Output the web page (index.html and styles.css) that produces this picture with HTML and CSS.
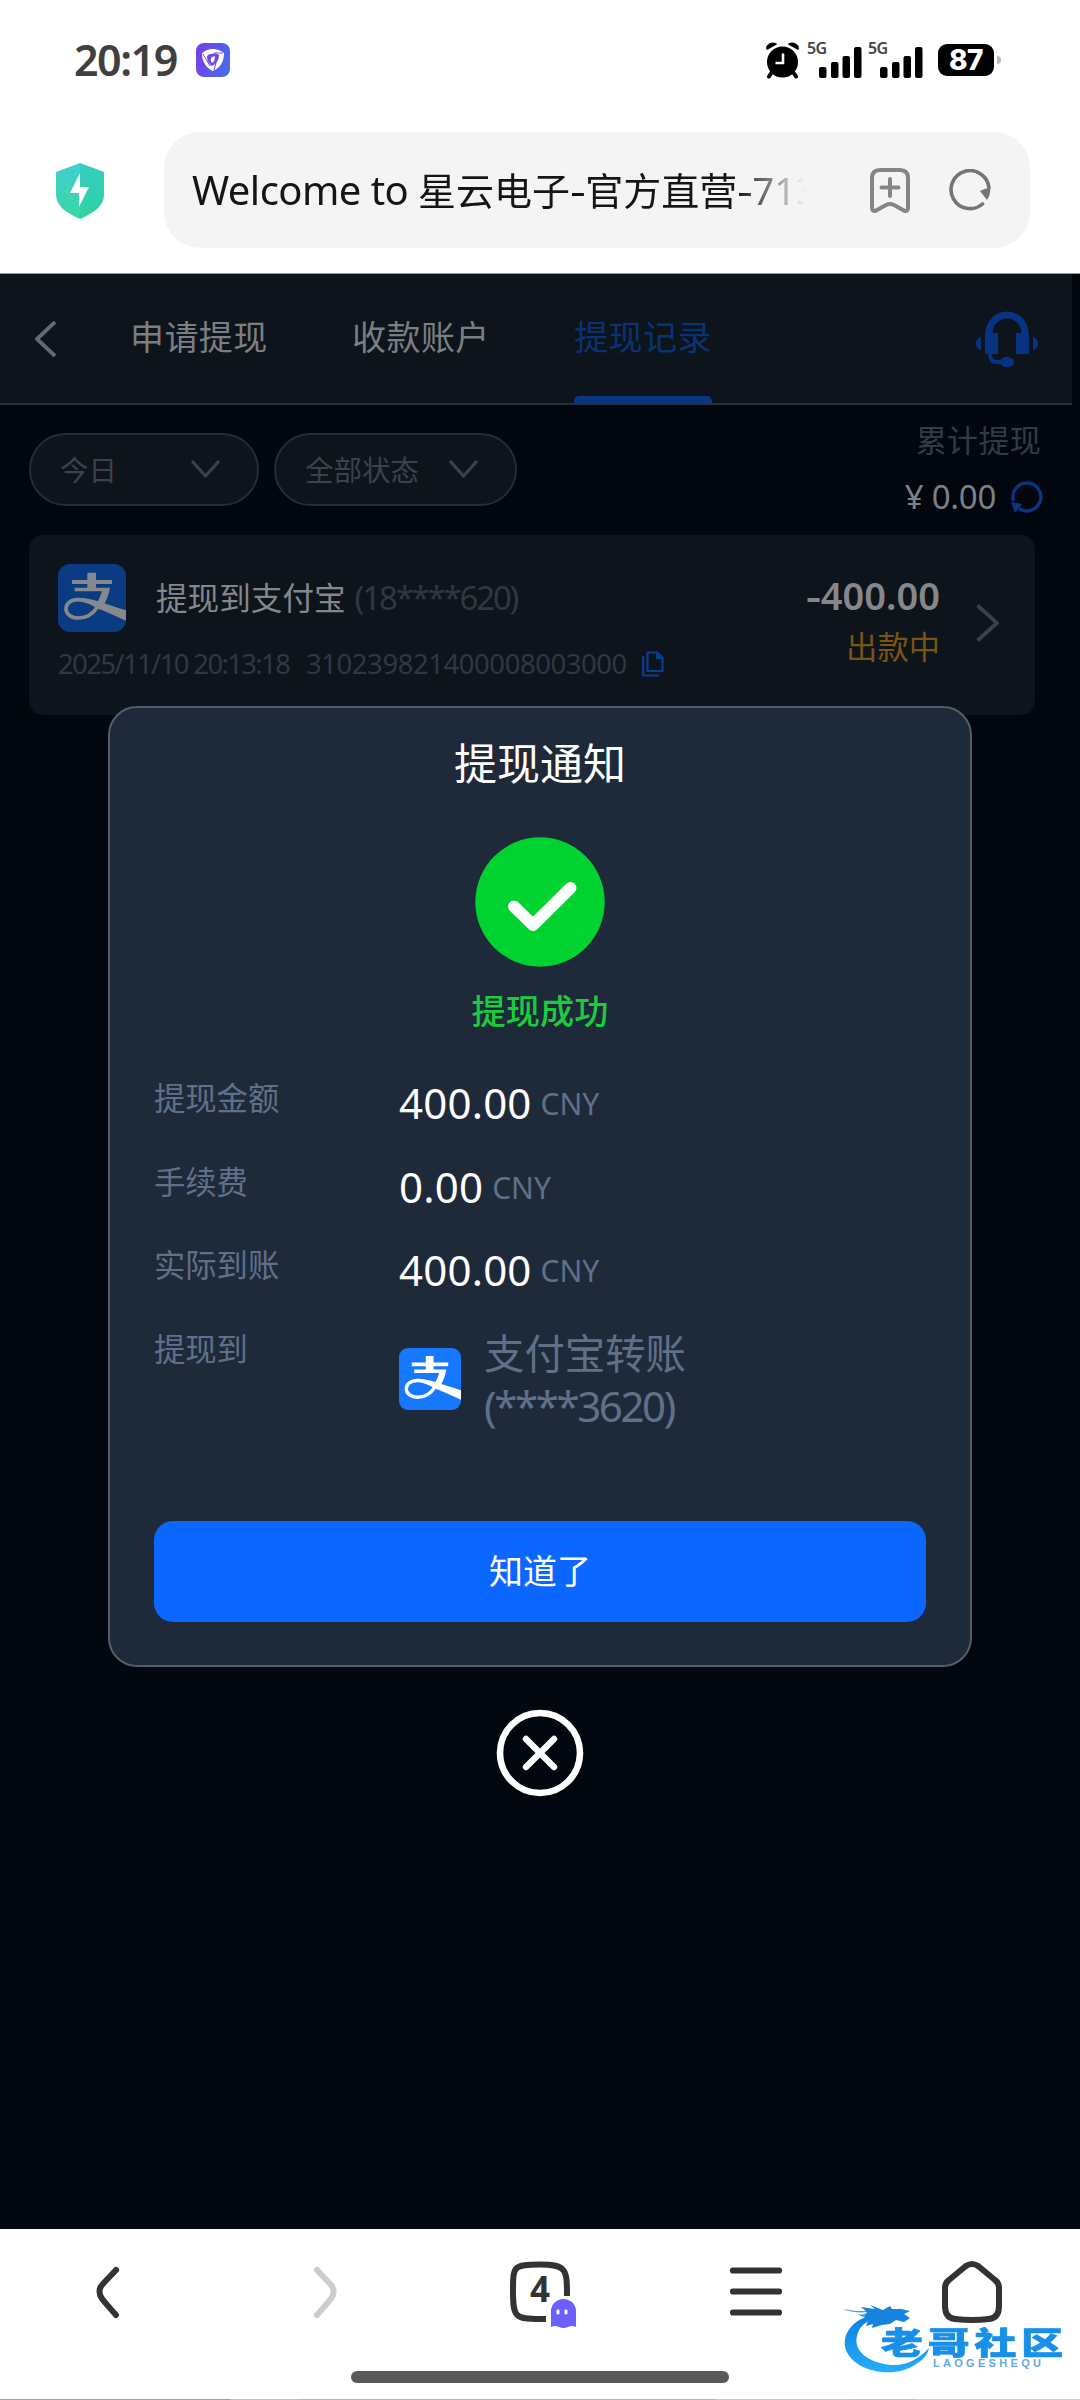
FILE: index.html
```html
<!DOCTYPE html>
<html lang="zh-CN">
<head>
<meta charset="utf-8">
<title>提现记录</title>
<link rel="stylesheet" href="styles.css">
</head>
<body>
<svg class="defs" width="0" height="0">
  <symbol id="alipay" viewBox="0 0 204 204">
    <path d="M88 26h26v22h48v12h-48v11h42c-5 28-16 50-29 66l-19-9c11-13 19-28 24-46H50V71h38V60H42V48h46z" fill="currentColor"/>
    <path d="M119 128C106 148 86 162 62 162c-22 0-38-11-38-28 0-16 15-27 36-27 22 0 42 8 62 19" fill="none" stroke="currentColor" stroke-width="11"/>
    <path d="M64 101c44 2 92 24 140 38v31l-94-42c-16-8-30-14-46-17z" fill="currentColor"/>
  </symbol>
  <symbol id="signal" viewBox="0 0 44 31">
    <rect x="0" y="20" width="7.500" height="11" rx="2"/><rect x="12" y="15" width="7.500" height="16" rx="2"/><rect x="23.500" y="9" width="7.500" height="22" rx="2"/><rect x="35" y="0" width="7.500" height="31" rx="2"/>
  </symbol>
</svg>

<div class="screen">
  <header class="status">
    <span class="clock">20:19</span>
    <svg class="app-badge" viewBox="0 0 34 34">
      <defs><linearGradient id="gp" x1="0" y1="0" x2="1" y2="0.300"><stop offset="0" stop-color="#7c3be8"/><stop offset="1" stop-color="#4a68ea"/></linearGradient></defs>
      <rect width="34" height="34" rx="8" fill="url(#gp)"/>
      <path d="M6 10.500C9 7 14 6 17 6s8 1.500 11 4c0 8-3 14-11 18C9 24 6 18 6 10.500z" fill="#fff"/>
      <path d="M11 13c3-3 9-3 12-1 0 4-2 9-7 11-3-2-5-5-5-10z" fill="#6a4ce8"/>
      <path d="M15 15c2-2 4-2 4-1 0 2-1 5-3 6-1-1-1.500-3-1-5z" fill="#fff"/>
      <path d="M7 11l7 12M18 27l2-7M27 10l-9 0" stroke="#6a4ce8" stroke-width="1"/>
    </svg>
    <div class="status-right">
      <svg class="alarm" viewBox="0 0 33 38">
        <circle cx="16.500" cy="21" r="15.500"/><path d="M1 8a6 5 0 0 1 9-5zM32 8a6 5 0 0 0-9-5z" stroke="#000" stroke-width="1.500" stroke-linejoin="round"/>
        <path d="M6 31l-3 4.500M27 31l3 4.500" stroke="#000" stroke-width="4" stroke-linecap="round"/>
        <path d="M17 12.500V22H9.500" fill="none" stroke="#fff" stroke-width="2.600"/>
      </svg>
      <div class="net"><span>5G</span><svg class="signal"><use href="#signal"/></svg></div>
      <div class="net"><span>5G</span><svg class="signal"><use href="#signal"/></svg></div>
      <div class="battery">87</div><i class="nub"></i>
    </div>
  </header>

  <div class="address">
    <svg class="shield" viewBox="0 0 48 56">
      <defs><linearGradient id="gs" x1="0" y1="0" x2="0" y2="1"><stop offset="0" stop-color="#41cfd0"/><stop offset="1" stop-color="#3bd6a4"/></linearGradient></defs>
      <path d="M24 0l24 9v22c0 12-9 18-24 25C9 49 0 43 0 31V9z" fill="url(#gs)"/><path d="M24 0l24 9v22c0 12-9 18-24 25z" fill="#18c9a0" opacity=".3"/>
      <path d="M24 10L14 30h9v14l10-20h-9z" fill="#fff"/>
    </svg>
    <div class="url">
      <span class="url-text"><span class="latin">Welcome to </span>星云电子<span class="dash">-</span>官方直营<span class="dash">-</span><span class="tail">713</span></span>
      <svg class="bookmark" viewBox="0 0 40 45"><path d="M2 10q0-8 8-8h20q8 0 8 8v29c0 4-2 5-5 3l-9-5q-4-2-8 0l-9 5c-3 2-5 1-5-3zM20 11v17M11.500 19.500h17" fill="none" stroke="#858585" stroke-width="4" stroke-linecap="round"/></svg>
      <svg class="reload" viewBox="0 0 42 43"><path d="M33.500 35A19 19 0 1 1 40 19" fill="none" stroke="#757575" stroke-width="3.600" stroke-linecap="round"/><path d="M31 22q5-3 10-3 1 6-3 12z" fill="#757575"/></svg>
    </div>
  </div>

  <main class="page">
    <nav class="tabs">
      <svg class="back" viewBox="0 0 21 36"><path d="M20 1L2 18l18 17" fill="none" stroke="#646a75" stroke-width="3.800"/></svg>
      <a class="tab">申请提现</a><a class="tab">收款账户</a><a class="tab active">提现记录</a>
      <svg class="headset" viewBox="0 0 62 56">
        <path d="M13 34V22a18 18 0 0 1 36 0v12" fill="none" stroke="#083282" stroke-width="7"/>
        <path d="M9 22h13v21H9zM40 22h13v21H40zM5 26v13q-5-1-5-6.500T5 26zM57 26v13q5-1 5-6.500T57 26z" fill="#083282"/>
        <path d="M14 43q0 8 7 8h6" fill="none" stroke="#083282" stroke-width="4"/><ellipse cx="31" cy="51" rx="7" ry="5.200" fill="#083282"/>
      </svg>
    </nav>

    <section class="filters">
      <div class="select day"><span>今日</span><svg class="caret" viewBox="0 0 29 18"><path d="M1 1l13.500 15L28 1" fill="none" stroke="#3a414d" stroke-width="3.200"/></svg></div>
      <div class="select state"><span>全部状态</span><svg class="caret" viewBox="0 0 29 18"><path d="M1 1l13.500 15L28 1" fill="none" stroke="#3a414d" stroke-width="3.200"/></svg></div>
      <div class="total">
        <div class="total-label">累计提现</div>
        <div class="total-value"><span>¥ 0.00</span><svg class="refresh" viewBox="0 0 32 32"><path d="M2.500 20A14 14 0 1 1 8 27.500" fill="none" stroke="#0a3580" stroke-width="3.400"/><path d="M0 21l11 2-7 9z" fill="#0a3580"/></svg></div>
      </div>
    </section>

    <article class="record">
      <div class="record-main">
        <div class="record-title"><svg class="pay-icon dim"><use href="#alipay"/></svg><span class="name">提现到支付宝</span><span class="acct">(18****620)</span></div>
        <div class="record-meta"><span class="time">2025/11/10 20:13:18</span><span class="serial">310239821400008003000</span>
          <svg class="copy" viewBox="0 0 22 26"><path d="M5.500 1.500h10l5 5v13.500h-15z" fill="none" stroke="#0b3d8f" stroke-width="2.200"/><path d="M14 1l7 7h-7z" fill="#0b3d8f"/><path d="M1.200 5v19.500H17" fill="none" stroke="#0b3d8f" stroke-width="2.200"/></svg></div>
      </div>
      <div class="record-side"><div class="sum"><span class="minus">-</span>400.00</div><div class="pending">出款中</div></div>
      <svg class="more" viewBox="0 0 23 38"><path d="M1.500 1.500L21 19 1.500 36.500" fill="none" stroke="#3b404b" stroke-width="3.800"/></svg>
    </article>

    <div class="overlay">
      <div class="modal">
        <h1>提现通知</h1>
        <svg class="ok" viewBox="0 0 130 130"><circle cx="65" cy="65" r="64.700" fill="#00d22f"/><path d="M39 69.500L58 88l37.500-37" fill="none" stroke="#fff" stroke-width="12" stroke-linecap="round" stroke-linejoin="round"/></svg>
        <div class="result">提现成功</div>
        <dl class="details">
          <dt>提现金额</dt><dd><b>400.00</b><small>CNY</small></dd>
          <dt>手续费</dt><dd><b>0.00</b><small>CNY</small></dd>
          <dt>实际到账</dt><dd><b>400.00</b><small>CNY</small></dd>
          <dt>提现到</dt><dd class="target"><svg class="pay-icon"><use href="#alipay"/></svg><span>支付宝转账<br><span class="mask">(****3620)</span></span></dd>
        </dl>
        <button class="confirm">知道了</button>
      </div>
      <svg class="close" viewBox="0 0 88 88"><circle cx="44" cy="44" r="40" fill="none" stroke="#fff" stroke-width="6.600"/><path d="M30 30l28 28M58 30L30 58" stroke="#fff" stroke-width="6.400" stroke-linecap="round"/></svg>
    </div>
  </main>

  <footer class="toolbar">
    <div class="tools">
      <svg class="tool" viewBox="0 0 80 80"><path d="M48 19C34 34 31.500 35 31.500 40.500S34 48 48 64" fill="none" stroke="#333" stroke-width="6" stroke-linecap="round"/></svg>
      <svg class="tool" viewBox="0 0 80 80"><path d="M33 19c14 15 16.500 16 16.500 21.500S47 48 33 64" fill="none" stroke="#ccc" stroke-width="6" stroke-linecap="round"/></svg>
      <div class="tool windows">
        <svg viewBox="0 0 80 80"><path d="M67 45C67 19 67 13.500 40 13.500S13 15 13 40.500 15 68 40 68h6" fill="none" stroke="#333" stroke-width="6"/></svg>
        <span>4</span>
        <svg class="ghost" viewBox="0 0 25 29"><path d="M0 28V12a12.500 12 0 0 1 25 0v16q-4-2-8 0-4.500 2-9 0-4-2-8 0z" fill="#6b5fff"/><ellipse cx="7" cy="13" rx="1.700" ry="2.800" fill="#fff"/><ellipse cx="15" cy="13" rx="1.700" ry="2.800" fill="#fff"/></svg>
      </div>
      <svg class="tool" viewBox="0 0 80 80"><path d="M17 19.500h46M17 40.500h46M17 61.500h46" stroke="#333" stroke-width="6.200" stroke-linecap="round"/></svg>
      <svg class="tool" viewBox="0 0 80 80"><path d="M13 37q0-5 4-8l17-14q6-4 12 0l17 14q4 3 4 8v18q0 12-10 13-17 2-34 0-10-1-10-13z" fill="none" stroke="#333" stroke-width="6"/></svg>
    </div>
    <div class="gesture"></div>
    <div class="edge"></div>
    <div class="watermark">
      <svg viewBox="0 0 235 90">
        <defs><linearGradient id="gd" x1="0" y1="0" x2="0" y2="1"><stop offset="0" stop-color="#0a7fe0"/><stop offset="1" stop-color="#27adfb"/></linearGradient></defs>
        <path d="M42 19C17 23 6 40 11 55c8 21 45 29 67 16 9-5 15-11 16-18-11 12-24 18-38 17C34 68 18 56 22 41c2-9 8-15 20-18z" fill="url(#gd)"/>
        <path d="M8 14c10 2 19 3 30 1l5 2-4 4c-5-1-7-1-8 1-4 0-6-1-8-3 4 1 8 0 10-2-9 1-19 0-25-3z" fill="#4a9ee4"/>
        <path d="M26 12l14 2-5-4 13 5 7-4 2 3 9 0 9 2-6 3 6 4-6 4-8-2-6 4-8 1-10 3 1-4-7 2 2-5-8 4 4-7 3-6z" fill="#1484df"/>
      </svg>
      <div class="wm-text">老哥社区</div>
      <div class="wm-sub">LAOGESHEQU</div>
    </div>
  </footer>
</div>
</body>
</html>
```
FILE: styles.css
```css
* { box-sizing: border-box; }
body { margin: 0; background: #fff; font-family: "Noto Sans", "Noto Sans CJK SC", sans-serif; }
svg { display: block; flex: none; }
.defs { position: absolute; }
.screen { width: 1080px; height: 2400px; display: flex; flex-direction: column; overflow: hidden; }

.status { height: 120px; padding: 0 79px 0 74px; display: flex; align-items: center; }
.clock { width: 122px; font-size: 43px; line-height: 60px; font-weight: 600; letter-spacing: -1.500px; color: #404040; }
.app-badge { width: 34px; height: 34px; }
.status-right { margin-left: auto; display: flex; align-items: center; }
.alarm { width: 33px; height: 38px; margin-right: 8px; }
.net { display: flex; width: 61px; height: 34px; }
.net span { width: 12px; font: 600 16px/10px "Noto Sans", sans-serif; letter-spacing: -0.600px; color: #444; white-space: nowrap; }
.signal { width: 44px; height: 31px; margin-top: 4px; }
.battery { width: 56px; height: 32px; margin-left: 9px; border-radius: 9px; background: #000; color: #fff; font: 800 28px/33px Inter, sans-serif; text-align: center; letter-spacing: -0.500px; }
.nub { width: 4px; height: 8px; margin-left: 3px; border-radius: 0 4px 4px 0; background: #bbb; }

.address { height: 153px; padding: 12px 50px 0 56px; display: flex; align-items: flex-start; }
.shield { width: 48px; height: 56px; margin: 31px 60px 0 0; }
.url { flex: 1; height: 116px; padding: 0 38px 0 28px; border-radius: 36px; background: #f4f4f4; display: flex; align-items: center; }
.url-text { width: 613px; margin-right: 65px; overflow: hidden; white-space: nowrap; font-size: 38px; line-height: 60px; color: #151515; -webkit-mask-image: linear-gradient(90deg, #000 89%, transparent 100%); mask-image: linear-gradient(90deg, #000 89%, transparent 100%); }
.latin { font-size: 40px; letter-spacing: -0.550px; }
.dash { display: inline-block; padding-right: 3px; transform: scaleX(1.300); transform-origin: 0 50%; }
.bookmark { width: 40px; height: 45px; margin-right: 39px; }
.reload { width: 42px; height: 43px; }

.page { position: relative; height: 1956px; border-top: 1px solid #999; background: #01060f; font-family: "Noto Sans CJK SC", sans-serif; }
.tabs { width: 1072px; height: 131px; padding: 0 34px 0 35px; display: flex; align-items: center; background: #0d141b; border-bottom: 2px solid #292e36; }
.back { width: 21px; height: 36px; margin-right: 74px; }
.tab { position: relative; height: 129px; margin-right: 84.500px; font-size: 34px; letter-spacing: 0.400px; line-height: 124px; color: #7c7f82; }
.tab.active { color: #0b3373; }
.tab.active::after { content: ""; position: absolute; left: 0; right: 0; bottom: 0; height: 7px; border-radius: 5px 5px 0 0; background: #0a3580; }
.headset { width: 62px; height: 56px; margin-left: auto; }

.filters { height: 130px; padding: 28px 39px 0 29px; display: flex; align-items: flex-start; }
.select { height: 73px; border: 2px solid #262c36; border-radius: 37px; background: #0d141b; padding: 0 37px 2px 29px; display: flex; align-items: center; justify-content: space-between; font-size: 28.500px; line-height: 60px; color: #3b414d; }
.day { width: 230px; margin-right: 15px; }
.state { width: 243px; }
.caret { width: 29px; height: 18px; }
.total { margin: -22px 0 0 auto; display: flex; flex-direction: column; align-items: flex-end; }
.total-label { font-size: 31px; line-height: 56px; color: #343a45; letter-spacing: 0.300px; }
.total-value { display: flex; align-items: center; font: 33px/60px "Noto Sans", sans-serif; letter-spacing: -0.300px; color: #7c7f84; gap: 15px; margin-right: -2px; }
.refresh { width: 32px; height: 32px; }

.record { width: 1006px; height: 180px; margin-left: 29px; padding: 29px 36px 0 29px; border-radius: 14px; background: #0d141b; display: flex; }
.record-title { display: flex; align-items: center; height: 68px; }
.pay-icon { color: #fff; background: #1677ff; }
.dim { width: 68px; height: 68px; margin-right: 30px; border-radius: 12px; color: #85898e; background: #0b3b83; }
.name { font-size: 31.600px; line-height: 64px; margin: -4px 9px 0 0; color: #85878a; }
.acct { font: 33px/64px "Noto Sans", sans-serif; letter-spacing: -2.200px; color: #303743; }
.record-meta { display: flex; align-items: center; margin-top: 13px; font: 27.500px/38px "Noto Sans", sans-serif; color: #303743; white-space: nowrap; }
.time { width: 248px; letter-spacing: -1.650px; }
.serial { width: 336px; letter-spacing: -0.450px; }
.copy { width: 22px; height: 26px; }
.record-side { margin-left: auto; text-align: right; }
.sum { font: 600 38px/50px "Noto Sans", sans-serif; color: #85878a; margin-top: 6px; }
.minus { display: inline-block; transform: scaleX(1.250); transform-origin: 100% 50%; }
.pending { font-size: 31.300px; line-height: 48px; color: #7b5411; margin-top: 2px; }
.more { width: 23px; height: 38px; margin: 40px 0 0 36px; }

.overlay { position: absolute; left: 108px; top: 432px; width: 864px; display: flex; flex-direction: column; align-items: center; }
.modal { width: 864px; height: 961px; padding: 26px 44px 0; border: 2px solid #525c6a; border-radius: 29px; background: #1e2a3a; display: flex; flex-direction: column; align-items: center; }
h1 { margin: 0; font-size: 43px; font-weight: 400; line-height: 54px; color: #fff; }
.ok { width: 130px; height: 130px; margin-top: 49px; }
.result { margin-top: 18px; font-size: 34.200px; font-weight: 500; line-height: 48px; color: #1bcb40; }
.details { width: 100%; margin: 39px 0 0; display: grid; grid-template-columns: 245px 1fr; grid-template-rows: 83.500px 83.500px 83.500px 120px; }
dt { font-size: 31.300px; line-height: 50px; color: #617089; }
dd { margin: 0; display: flex; align-items: flex-start; font-family: "Noto Sans", sans-serif; }
dd b { font-size: 42px; font-weight: 400; line-height: 62px; letter-spacing: 0.200px; color: #fff; margin-right: 9px; }
dd small { font-size: 30px; line-height: 63px; color: #617089; }
.target { align-items: center; height: 112px; font: 40.400px/53px "Noto Sans CJK SC", sans-serif; color: #617089; }
.target .pay-icon { width: 62px; height: 62px; margin-right: 23px; border-radius: 9px; }
.mask { font: 42px/53px "Noto Sans", sans-serif; letter-spacing: -2.400px; }
.confirm { width: 772px; height: 101px; flex: none; margin-top: 78px; border: 0; border-radius: 19px; background: #0b67ff; color: #fff; font: 34px/60px "Noto Sans CJK SC", sans-serif; padding: 0 0 2px; }
.close { width: 88px; height: 88px; margin-top: 42px; }

.toolbar { position: relative; height: 171px; background: #fff; }
.tools { height: 142px; padding: 22px 68px 0; display: flex; justify-content: space-between; }
.tool { width: 80px; height: 80px; }
.windows { position: relative; }
.windows span { position: absolute; left: 0; top: 15px; width: 80px; text-align: center; font: 700 35px/46px "Noto Sans", sans-serif; color: #333; }
.ghost { position: absolute; left: 51px; top: 48px; width: 25px; height: 29px; }
.gesture { width: 378px; height: 12px; margin: 0 auto; border-radius: 6px; background: #595959; }
.edge { height: 1px; margin-top: 16px; background: linear-gradient(90deg, #b29aa0 0 230px, #bfc0c0 230px 300px, #9bc3c6 300px 715px, #c8c8c8 715px 850px, #e0bd90 850px 915px, #d2d0c6 915px); }
.watermark { position: absolute; left: 835px; top: 66px; width: 235px; height: 90px; }
.wm-text { position: absolute; left: 46px; top: 30px; font: 900 31px/31px "Noto Sans CJK SC", sans-serif; letter-spacing: 3.600px; white-space: nowrap; transform: scaleX(1.350); transform-origin: 0 0; color: #188fe9; -webkit-text-stroke: 0.700px #188fe9; }
.wm-sub { position: absolute; left: 98px; top: 62px; font: 700 11px/12px "Liberation Sans", sans-serif; letter-spacing: 3.300px; color: #63a9e5; }
```
